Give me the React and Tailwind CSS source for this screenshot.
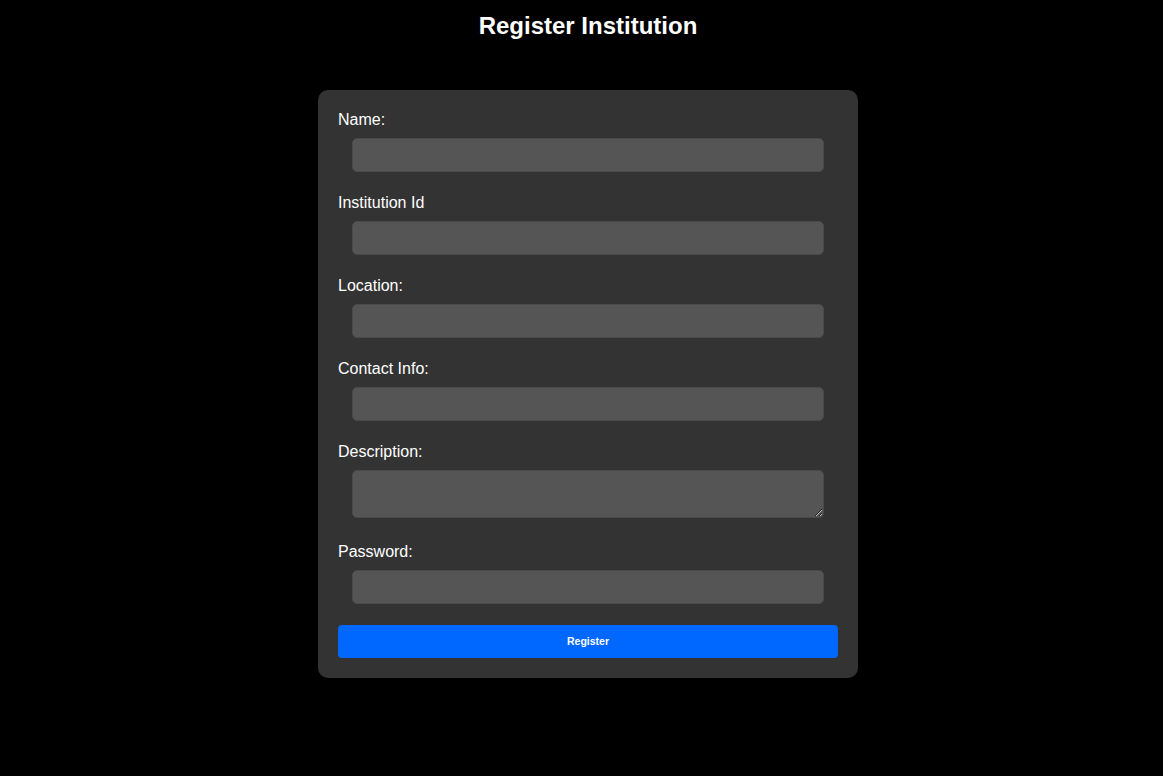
export default function App() {
  const fields = [
    { label: "Name:", type: "text" },
    { label: "Institution Id", type: "text" },
    { label: "Location:", type: "text" },
    { label: "Contact Info:", type: "text" },
  ];
  const inputCls =
    "block ml-[14px] w-[472px] h-[34px] bg-[#555555] border border-[#4a4a4a] rounded-[5px] text-white px-2 outline-none";
  return (
    <div
      className="min-h-[776px] bg-black text-white pl-[13px] pt-[12px]"
      style={{ fontFamily: '"Liberation Sans", Arial, sans-serif' }}
    >
      <h1 className="text-center text-[24px] font-bold leading-[28px]">Register Institution</h1>
      <div className="flex justify-center mt-[50px]">
        <form
          className="w-[540px] bg-[#333333] rounded-[10px] p-[20px]"
          onSubmit={(e) => e.preventDefault()}
        >
          {fields.map((f) => (
            <div key={f.label} className="mb-[21px]">
              <label className="block text-[16px] leading-[19px] mb-[9px]">{f.label}</label>
              <input type={f.type} className={inputCls} />
            </div>
          ))}
          <div className="mb-[24px]">
            <label className="block text-[16px] leading-[19px] mb-[9px]">Description:</label>
            <textarea className="block ml-[14px] w-[472px] h-[48px] bg-[#555555] border border-[#4a4a4a] rounded-[5px] text-white px-2 outline-none" />
          </div>
          <div className="mb-[21px]">
            <label className="block text-[16px] leading-[19px] mb-[9px]">Password:</label>
            <input type="password" className={inputCls} />
          </div>
          <button
            type="submit"
            className="block w-full h-[33px] bg-[#0068ff] rounded-[4px] text-white text-[10.5px] font-bold"
          >
            Register
          </button>
        </form>
      </div>
    </div>
  );
}
